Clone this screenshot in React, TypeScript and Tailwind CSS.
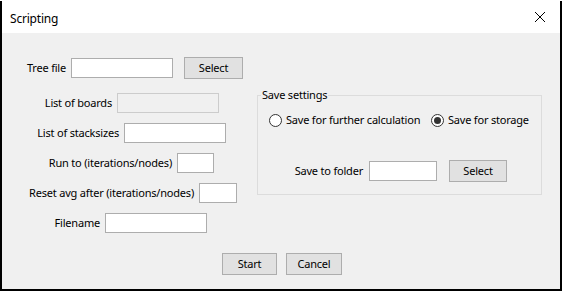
const fieldRows = [
  { label: "List of boards", labelW: 110, inputW: 102, disabled: true },
  { label: "List of stacksizes", labelW: 117, inputW: 102 },
  { label: "Run to (iterations/nodes)", labelW: 170, inputW: 37 },
  { label: "Reset avg after (iterations/nodes)", labelW: 192, inputW: 38 },
  { label: "Filename", labelW: 98, inputW: 102 }
];

const TextBox = ({ w, disabled }: { w: number; disabled?: boolean }) => (
  <div
    className={`h-[20px] border ${disabled ? "border-[#cccccc] bg-[#f0f0f0]" : "border-[#adadad] bg-white"}`}
    style={{ width: w }}
  />
);

const WinButton = ({ label, w }: { label: string; w: number }) => (
  <div
    className="h-[22px] flex items-center justify-center border border-[#adadad] bg-[#e1e1e1] text-black"
    style={{ width: w }}
  >
    {label}
  </div>
);

const Radio = ({ checked }: { checked?: boolean }) => (
  <span className="w-[13px] h-[13px] rounded-full border border-[#333333] bg-white flex items-center justify-center shrink-0">
    {checked && <span className="w-[7px] h-[7px] rounded-full bg-[#333333]" />}
  </span>
);

export default function App() {
  return (
    <div className="w-[562px] h-[291px] bg-black font-['Noto_Sans',sans-serif] text-[11px] tracking-[-0.2px] text-black leading-[16px]">
      <div className="ml-[2px] mt-[1px] w-[558px] h-[288px] flex flex-col bg-[#f0f0f0]">
        {/* title bar */}
        <div className="h-[32px] bg-white flex items-center justify-between pl-[8px] pr-[10px] pt-[3px] text-[12px]">
          <span>Scripting</span>
          <svg width="12" height="12" viewBox="0 0 12 12" className="mr-[4px] -mt-[3px]">
            <path d="M1 1 L11 11 M11 1 L1 11" stroke="#000" strokeWidth="1" />
          </svg>
        </div>

        <div className="flex">
          {/* left column */}
          <div className="w-[255px] pt-[25px] flex flex-col">
            <div className="flex items-center h-[20px] mb-[15px]">
              <span className="w-[64px] text-right whitespace-nowrap">Tree file</span>
              <span className="ml-[5px]"><TextBox w={102} /></span>
              <span className="ml-[11px]"><WinButton label="Select" w={59} /></span>
            </div>
            <div className="flex flex-col gap-[10px]">
              {fieldRows.map((r) => (
                <div key={r.label} className="flex items-center h-[20px]">
                  <span className="text-right whitespace-nowrap" style={{ width: r.labelW }}>{r.label}</span>
                  <span className="ml-[5px]"><TextBox w={r.inputW} disabled={r.disabled} /></span>
                </div>
              ))}
            </div>
          </div>

          {/* save settings group */}
          <div className="relative mt-[62px] w-[285px] h-[100px] border border-[#dcdcdc]">
            <span className="absolute -top-[9px] left-[3px] px-[1px] bg-[#f0f0f0]">Save settings</span>
            <div className="flex items-center h-[16px] mt-[16px] pl-[11px]">
              <label className="w-[162px] flex items-center gap-[4px] whitespace-nowrap">
                <Radio />
                Save for further calculation
              </label>
              <label className="flex items-center gap-[4px] whitespace-nowrap">
                <Radio checked />
                Save for storage
              </label>
            </div>
            <div className="flex items-center mt-[32px]">
              <span className="w-[105px] text-right whitespace-nowrap">Save to folder</span>
              <span className="ml-[6px]"><TextBox w={68} /></span>
              <span className="ml-[12px]"><WinButton label="Select" w={58} /></span>
            </div>
          </div>
        </div>

        <div className="flex justify-center gap-[9px] mt-[20px] pl-[2px]">
          <WinButton label="Start" w={55} />
          <WinButton label="Cancel" w={56} />
        </div>
      </div>
    </div>
  );
}
